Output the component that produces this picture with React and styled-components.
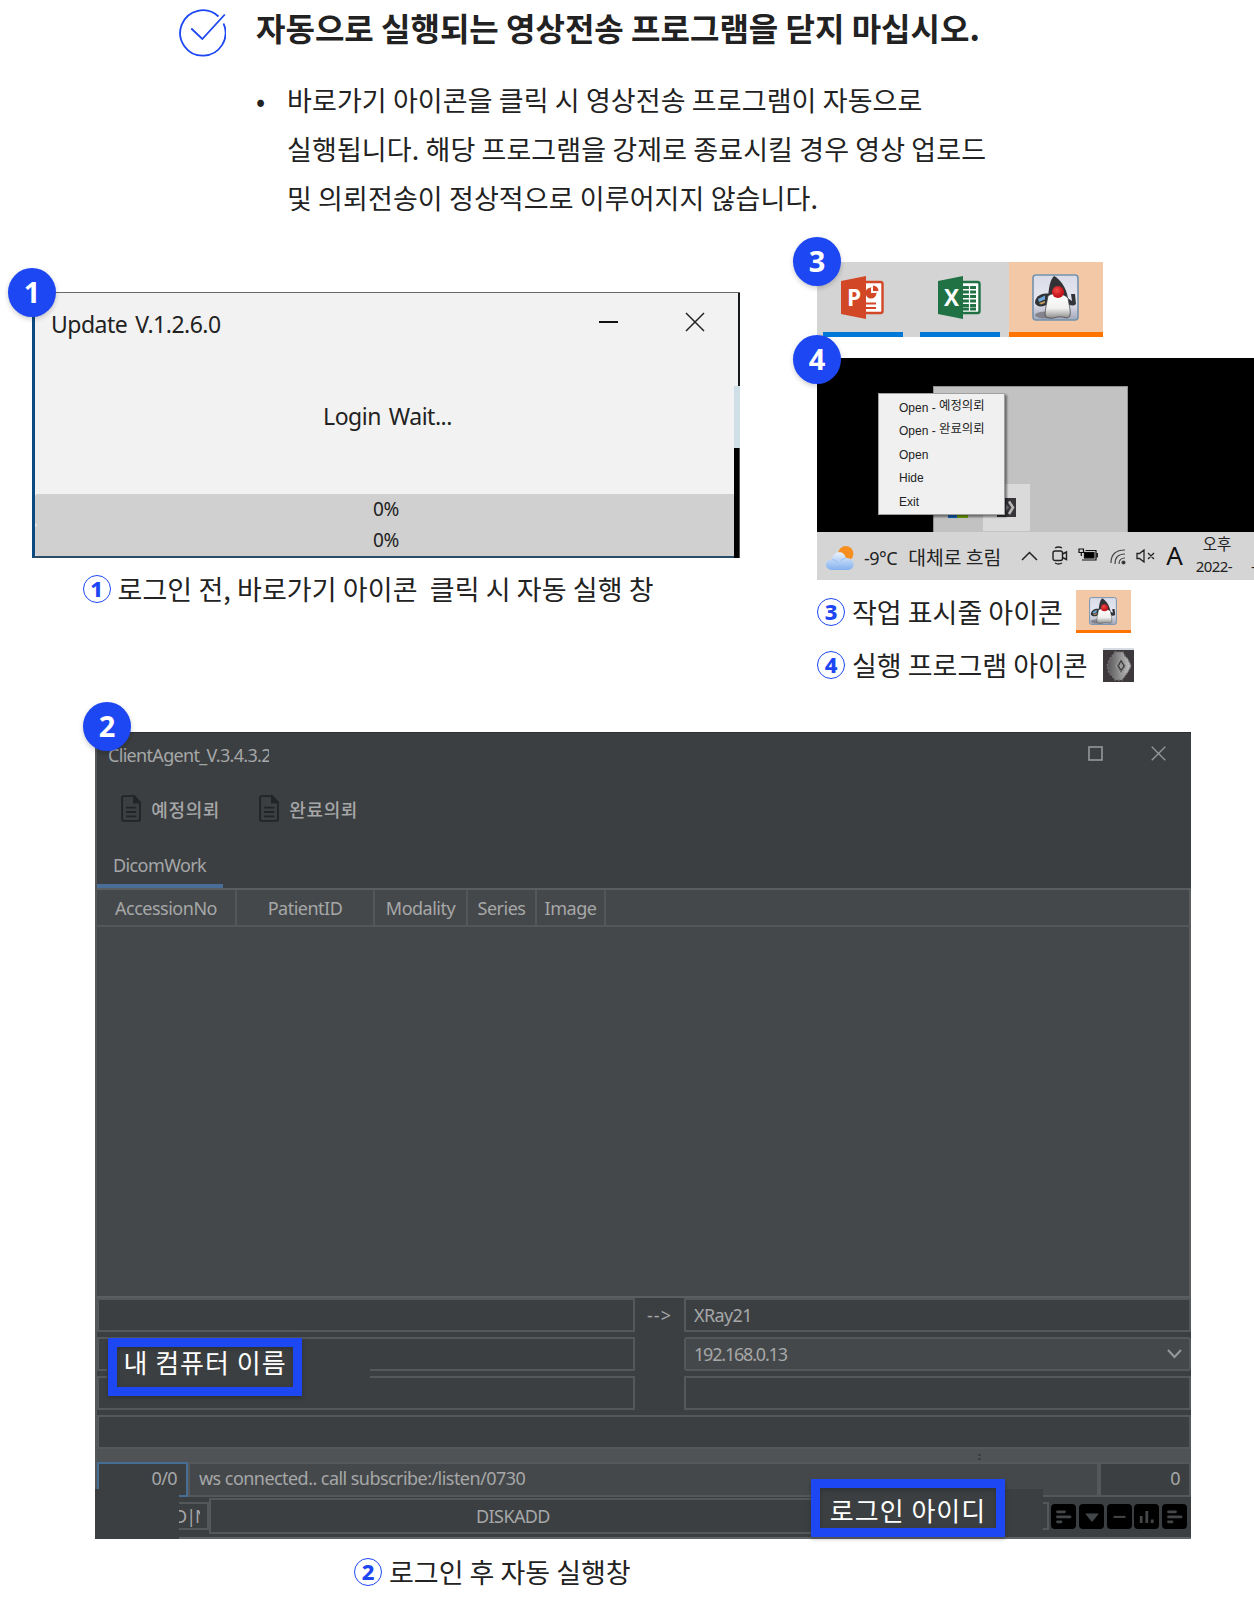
import React from "react";
import styled, { createGlobalStyle } from "styled-components";

const KR = '"Noto Sans CJK KR", sans-serif';
const UI = '"Noto Sans", "Noto Sans CJK KR", sans-serif';
const BLUE = "#1d47f3";
const LINE = "#5b5d5f";

const Global = createGlobalStyle`
  * { box-sizing: border-box; }
  body { margin: 0; background: #fff; font-family: ${KR}; color: #222; overflow: hidden; }
  svg { display: block; }
`;

const Page = styled.main`
  width: 1254px;
  height: 1608px;
  display: flex;
  flex-direction: column;
  overflow: hidden;
`;

const Text = styled.span`
  display: block;
  white-space: pre;
  font-family: ${(p) => p.$font || KR};
  font-size: ${(p) => p.$size}px;
  font-weight: ${(p) => p.$weight || 400};
  line-height: ${(p) => p.$lh || p.$size}px;
  letter-spacing: ${(p) => p.$ls || 0}px;
  word-spacing: ${(p) => p.$ws || 0}px;
  color: ${(p) => p.$color || "inherit"};
`;

const Intro = styled.header`
  display: flex;
  align-items: flex-start;
  gap: 30px;
  height: 262px;
  padding: 7px 0 0 178px;
`;
const IntroBody = styled.div`
  display: flex;
  flex-direction: column;
`;
const Title = styled.h1`
  margin: 0;
  font-size: 32px;
  line-height: 40px;
  font-weight: 700;
  white-space: nowrap;
`;
const Bullet = styled.div`
  display: flex;
  margin-top: 28px;
  font-size: 27px;
  line-height: 49px;
  letter-spacing: 0.1px;
  white-space: pre;
`;
const Dot = styled.span`
  width: 31px;
`;

const Middle = styled.section`
  display: flex;
  height: 470px;
`;
const LeftFigure = styled.div`
  width: 785px;
  padding: 30px 0 0 32px;
`;
const RightFigure = styled.div`
  width: 469px;
  padding-left: 32px;
`;
const Anchor = styled.div`
  position: relative;
`;
const Badge = styled.b`
  position: absolute;
  left: ${(p) => p.$x}px;
  top: ${(p) => p.$y}px;
  width: 48px;
  height: 49px;
  border-radius: 50%;
  background: ${BLUE};
  color: #fff;
  font: 700 29px/47px "Open Sans", sans-serif;
  text-align: center;
  box-shadow: 0 2px 5px rgba(0, 0, 0, 0.2);
  z-index: 3;
`;
const Caption = styled.div`
  display: flex;
  align-items: center;
  height: ${(p) => p.$h || 40}px;
  margin-top: ${(p) => p.$mt || 0}px;
  padding-left: ${(p) => p.$pl || 0}px;
`;
const Ring = styled.b`
  width: 28px;
  height: 28px;
  border: 1px solid ${BLUE};
  border-radius: 50%;
  color: ${BLUE};
  font: 800 22px/25px "Noto Sans", sans-serif;
  text-align: center;
  margin-right: 7px;
`;

const UpdateWindow = styled.div`
  display: grid;
  grid-template-columns: 702px 6px;
  width: 708px;
  height: 266px;
  border-top: 1px solid #6a6a6a;
`;
const UpdatePane = styled.div`
  display: flex;
  flex-direction: column;
  background: #f2f2f2;
  border-left: 3px solid #0b4a80;
  border-bottom: 2px solid #2b4c66;
`;
const UpdateBar = styled.div`
  display: flex;
  height: 60px;
  padding: 0 0 0 16px;
`;
const UpdateButtons = styled.div`
  display: flex;
  align-items: center;
  gap: 67px;
  margin-left: auto;
  padding-right: 29px;
  height: 57px;
`;
const UpdateMessage = styled.div`
  display: flex;
  justify-content: center;
  padding: 47px 0 0 6px;
  height: 141px;
`;
const Progress = styled.div`
  display: flex;
  justify-content: center;
  height: 31px;
  padding-left: 3px;
  background: #d0d0d0;
  border-radius: 3px 0 0 3px;
`;
const Edge = styled.div`
  display: grid;
  grid-template-rows: 93px 62px 1fr;
`;
const EdgeTop = styled.div`
  background: #f2f2f2;
  border-right: 2px solid #161a1d;
`;
const EdgeBlue = styled.div`
  background: #d0dee8;
`;
const EdgeBlack = styled.div`
  background: #000;
  border-right: 1px solid #555;
`;

const Taskbar = styled.div`
  display: flex;
  width: 286px;
  height: 75px;
  background: #d4d4d4;
`;
const Task = styled.div`
  display: flex;
  justify-content: center;
  width: ${(p) => p.$w}px;
  margin-left: ${(p) => p.$ml}px;
  padding-top: ${(p) => p.$pt}px;
  padding-right: 2px;
  background: ${(p) => p.$bg || "transparent"};
  border-bottom: 5px solid ${(p) => p.$line};
`;

const Desktop = styled.div`
  position: relative;
  margin-top: 21px;
  width: 437px;
  height: 222px;
  background: #000;
  display: flex;
  flex-direction: column;
`;
const Backdrop = styled.div`
  height: 174px;
  padding: 28px 0 0 116px;
`;
const TrayPopup = styled.div`
  width: 195px;
  height: 146px;
  background: #c2c2c2;
  border: 1px solid #929292;
  border-bottom: 0;
  display: flex;
  align-items: flex-end;
  padding-left: 14px;
`;
const FlagChip = styled.div`
  width: 20px;
  height: 4px;
  margin-bottom: 14px;
  background: linear-gradient(90deg, #1762b8 45%, #77a80c 45%);
`;
const TrayHighlight = styled.div`
  width: 47px;
  height: 47px;
  margin-left: 15px;
  margin-bottom: 1px;
  background: #dadada;
  padding: 14px 0 0 14px;
`;
const Menu = styled.div`
  position: absolute;
  left: 61px;
  top: 35px;
  width: 127px;
  height: 122px;
  padding: 2px 0 0 20px;
  background: #f0f0f0;
  border: 1px solid #a0a0a0;
  box-shadow: 2px 2px 2px rgba(0, 0, 0, 0.45);
`;
const MenuItem = styled.div`
  display: flex;
  height: 23.4px;
  font: 12px/24px "Liberation Sans", sans-serif;
  color: #222;
  white-space: pre;
`;
const MenuKr = styled.span`
  font: 12.4px/18px ${KR};
`;
const Tray = styled.div`
  display: flex;
  align-items: flex-start;
  height: 48px;
  background: #d5d5d5;
  overflow: hidden;
`;
const TraySlot = styled.div`
  margin-left: ${(p) => p.$ml}px;
  margin-top: ${(p) => p.$mt}px;
  flex: none;
`;
const Clock = styled.div`
  width: 60px;
  margin-left: 13px;
  flex: none;
`;
const ClockRow = styled.div`
  display: flex;
  justify-content: ${(p) => p.$justify};
  padding-left: ${(p) => p.$pl || 0}px;
  height: 22px;
`;
const DukeThumb = styled.div`
  display: flex;
  justify-content: center;
  width: 55px;
  height: 43px;
  margin-left: ${(p) => p.$ml}px;
  padding-top: 7px;
  background: #f3c8a6;
  border-bottom: 3px solid #ff7300;
`;
const GearThumb = styled.div`
  width: 31px;
  height: 34px;
  margin-left: ${(p) => p.$ml}px;
  padding-top: 1px;
  background: #3d383b;
  border-top: 2px solid #d5dde3;
`;

const AgentWrap = styled.section`
  position: relative;
  width: 1096px;
  margin-left: 95px;
`;
const Agent = styled.div`
  height: 807px;
  background: #3c3f41;
  border-left: 2px solid #55585a;
  border-top: 1px solid #2d2f31;
  border-bottom: 2px solid #606264;
  color: #a5a7a8;
  display: flex;
  flex-direction: column;
`;
const AgentTitle = styled.div`
  display: flex;
  justify-content: space-between;
  height: 56px;
  padding: 10px 25px 0 11px;
`;
const TitleClip = styled.div`
  width: 161px;
  height: 26px;
  margin-top: -1px;
  overflow: hidden;
`;
const AgentControls = styled.div`
  display: flex;
  gap: 48px;
  padding-top: 3px;
`;
const Tools = styled.div`
  display: flex;
  height: 56px;
  gap: 39px;
  padding: 5px 0 0 24px;
`;
const Tool = styled.div`
  display: flex;
  align-items: center;
  gap: 10px;
  height: 29px;
  width: 99px;
`;
const TabBar = styled.div`
  display: flex;
  height: 45px;
  border-bottom: 2px solid ${LINE};
`;
const Tab = styled.div`
  width: 126px;
  height: 43px;
  padding: 7px 0 0 16px;
  border-bottom: 4px solid #4a6d98;
`;
const HeaderRow = styled.div`
  display: grid;
  grid-template-columns: 140px 138px 93px 69px 69px 1fr;
  height: 37px;
  background: #45484a;
  border-bottom: 2px solid #54575a;
  border-right: 2px solid ${LINE};
`;
const HeaderCell = styled.div`
  display: flex;
  justify-content: center;
  padding-top: 5px;
  border-right: ${(p) => (p.$last ? 0 : 2)}px solid #54575a;
`;
const TableBody = styled.div`
  height: 371px;
  background: #45484a;
  border-right: 2px solid ${LINE};
  border-bottom: 2px solid ${LINE};
`;
const Form = styled.div`
  display: grid;
  grid-template-columns: 538px 49px 1fr;
  grid-auto-rows: 34px;
  row-gap: 5px;
  height: 117px;
`;
const Field = styled.div`
  display: flex;
  justify-content: space-between;
  align-items: center;
  padding: 0 7px 1px 8px;
  background: ${(p) => (p.$raised ? "#45484a" : "#3c3f41")};
  border: 2px solid #55585a;
  border-radius: ${(p) => (p.$raised ? 3 : 0)}px;
`;
const Arrow = styled.div`
  display: flex;
  align-items: center;
  justify-content: center;
`;
const WideField = styled.div`
  height: 34px;
  border: 2px solid #55585a;
`;
const Splitter = styled.div`
  height: 13px;
  background: #505355;
  display: flex;
  justify-content: flex-end;
  padding: 5px 210px 0 0;
`;
const Grip = styled.i`
  width: 3px;
  height: 6px;
  border-top: 2px solid #3c3f41;
  border-bottom: 2px solid #3c3f41;
`;
const Status = styled.div`
  display: grid;
  grid-template-columns: 91px 911px 1fr;
  height: 35px;
`;
const StatusCell = styled.div`
  display: flex;
  align-items: center;
  justify-content: ${(p) => p.$justify || "flex-start"};
  padding: 0 9px 3px;
  background: ${(p) => p.$bg || "#3c3f41"};
  border: 2px solid ${(p) => p.$line || "#55585a"};
`;
const Footer = styled.div`
  display: flex;
  align-items: center;
  height: 40px;
  padding-bottom: 2px;
`;
const FooterBox = styled.div`
  display: flex;
  align-items: center;
  justify-content: ${(p) => p.$justify || "center"};
  width: ${(p) => p.$w}px;
  height: ${(p) => p.$h}px;
  border: 2px solid #55585a;
  padding-right: ${(p) => p.$pr || 0}px;
`;
const FooterClip = styled.div`
  width: 26px;
  overflow: hidden;
`;
const FooterIcons = styled.div`
  display: flex;
  gap: 2.8px;
  padding-left: 2px;
`;
const Mask = styled.div`
  position: absolute;
  left: ${(p) => p.$x}px;
  top: ${(p) => p.$y}px;
  width: ${(p) => p.$w}px;
  height: ${(p) => p.$h}px;
  background: #3c3f41;
`;
const Callout = styled.div`
  position: absolute;
  left: ${(p) => p.$x}px;
  top: ${(p) => p.$y}px;
  width: ${(p) => p.$w}px;
  height: 58px;
  display: flex;
  justify-content: center;
  padding-top: ${(p) => p.$pt}px;
  border: 9px solid ${BLUE};
  background: #3c3f41;
  color: #fff;
  box-shadow: 0 2px 4px rgba(0, 0, 0, 0.25), inset 0 2px 4px rgba(0, 0, 0, 0.25);
`;
const CalloutText = styled(Text)`
  margin-top: ${(p) => p.$shift || 0}px;
`;

const CheckMark = () => (
  <svg width="48" height="50" viewBox="0 0 48 50" fill="none" stroke={BLUE} strokeWidth="1.8">
    <path d="M40.5 9.5A22.7 22.7 0 1 0 45.5 16.5" />
    <path d="M13.3 21.5L24.3 32L46.8 7.5" />
  </svg>
);

const Office = ({ color, letter, children }) => (
  <svg width="43" height="43" viewBox="0 0 43 43">
    <rect x="22" y="6" width="19.5" height="31" rx="2" fill="#fff" stroke={color} strokeWidth="2.4" />
    {children}
    <path d="M0 5L25 0V43L0 38Z" fill={color} />
    <text x="6" y="29.5" fontFamily="Open Sans, sans-serif" fontWeight="700" fontSize="22.5" fill="#fff">{letter}</text>
  </svg>
);

const Duke = ({ size }) => (
  <svg width={size} height={size} viewBox="0 0 47 47">
    <defs>
      <linearGradient id="dukeSky" x1="0" y1="0" x2="0" y2="1">
        <stop offset="0" stopColor="#d9dce8" />
        <stop offset="0.6" stopColor="#e6e7f0" />
        <stop offset="1" stopColor="#a2a6ba" />
      </linearGradient>
      <linearGradient id="dukeBelly" x1="0" y1="0" x2="0" y2="1">
        <stop offset="0" stopColor="#fff" />
        <stop offset="0.6" stopColor="#f0f0ee" />
        <stop offset="1" stopColor="#8c8c8a" />
      </linearGradient>
      <radialGradient id="dukeNose" cx="0.4" cy="0.35">
        <stop offset="0" stopColor="#f54a48" />
        <stop offset="1" stopColor="#c4161c" />
      </radialGradient>
    </defs>
    <rect x="1" y="1" width="45" height="45" rx="3" fill="url(#dukeSky)" stroke="#7392ad" strokeWidth="1.6" />
    <ellipse cx="14" cy="41" rx="11" ry="3.5" fill="#6d6d74" opacity="0.7" />
    <path d="M3 29C3 23 9 18 18 20L18 29C12 33 5 34 3 29Z" fill="#2f3236" />
    <path d="M6 25L13 21.5V25.5L7 28Z" fill="#6da6d6" />
    <path d="M7 29L13 27V29L9 30.5Z" fill="#c09a5c" />
    <path d="M34 23L40 27L39 20L43 20L44 30C41 33 37 31 34 29Z" fill="#333438" />
    <path d="M22 2C28 5 34 13 36 24L16 23C17 13 18 6 22 2Z" fill="#333337" />
    <path d="M16 22C21 18 31 19 36 24C37 31 39 37 38 42C35 46 31 42 28 43C24 42 20 47 13 42C13 35 15 28 16 22Z" fill="url(#dukeBelly)" stroke="#3c3c40" strokeWidth="0.7" />
    <circle cx="26" cy="18" r="6" fill="url(#dukeNose)" />
  </svg>
);

const Gear = () => (
  <svg width="31" height="30" viewBox="0 0 31 30">
    <defs>
      <linearGradient id="gearMetal" x1="0" x2="1">
        <stop offset="0" stopColor="#565456" />
        <stop offset="0.5" stopColor="#8d8c8d" />
        <stop offset="1" stopColor="#c4c4c4" />
      </linearGradient>
    </defs>
    <path d="M12 1H20L22 5L25 8L28 15L25 21L22 25L19 29H12L9 25L6 22L4 15L6 9L9 5Z" fill="url(#gearMetal)" stroke="#717071" strokeWidth="1.4" strokeDasharray="2 1.6" />
    <path d="M18 7L23 15L18 23L13 15Z" fill="#6a686a" stroke="#a2a2a2" />
    <path d="M18 10L21 15L18 19L15.5 15Z" fill="#9b9b9b" stroke="#333" />
  </svg>
);

const DocIcon = () => (
  <svg width="22" height="29" viewBox="0 0 22 29" fill="none" stroke="#222426" strokeWidth="2">
    <path d="M3 1.2H14.5L20.5 8V26Q20.5 27.8 18.5 27.8H3Q1.2 27.8 1.2 26V3Q1.2 1.2 3 1.2Z" />
    <path d="M14 1.5V8H20.5Z" fill="#222426" />
    <path d="M5.5 13.5H16.5M5.5 18.3H16.5M5.5 23H16.5" />
  </svg>
);

const Cross = ({ size, color, width }) => (
  <svg width={size} height={size} viewBox="0 0 20 20" fill="none" stroke={color} strokeWidth={width}>
    <path d="M1 1L19 19M19 1L1 19" />
  </svg>
);

const Weather = () => (
  <svg width="30" height="26" viewBox="0 0 31 26">
    <defs>
      <linearGradient id="cloudFill" x1="0" y1="0" x2="0" y2="1">
        <stop offset="0" stopColor="#e9f2fd" />
        <stop offset="1" stopColor="#84b1ee" />
      </linearGradient>
    </defs>
    <circle cx="21.5" cy="8.5" r="7.8" fill="#f78f20" />
    <path d="M7 25.3C-1.5 24.5-0.8 15 7 14.5C9 5 20 5 21.5 13C31.5 12 32 25 24 25.3Z" fill="url(#cloudFill)" />
    <path d="M7 14.8C12 14.5 13 18 13 18M21 13.5C17.5 13.5 16 16 16 16" stroke="#8ab4ea" strokeWidth="0.8" fill="none" />
  </svg>
);

const footerShapes = [
  <path key="a" d="M6.5 7.8H13.5M6.5 12.9H19M6.5 17.8H10" strokeLinecap="round" strokeWidth="2.8" />,
  <path key="b" d="M6 9.5H20L13 18Z" fill="#44474a" stroke="none" />,
  <path key="c" d="M6.5 12.9H18.5" />,
  <path key="d" d="M7.2 12V19M12.8 7V19M18.2 15.5V19" strokeWidth="2.8" />,
  <path key="e" d="M6.5 7.8H13.5M6.5 12.9H19M6.5 17.8H10" strokeLinecap="round" strokeWidth="2.8" />,
];

const FooterIcon = ({ children }) => (
  <svg width="25" height="25" viewBox="0 0 25 25" fill="none" stroke="#44474a" strokeWidth="2">
    <rect width="25" height="25" rx="4" fill="#000" stroke="none" />
    {children}
  </svg>
);

const columns = ["AccessionNo", "PatientID", "Modality", "Series", "Image"];
const menuItems = [
  ["Open - ", "예정의뢰"],
  ["Open - ", "완료의뢰"],
  ["Open", ""],
  ["Hide", ""],
  ["Exit", ""],
];

const Label = ({ children, ls = -0.6, size = 18 }) => (
  <Text $font={UI} $size={size} $lh={26} $ls={ls}>{children}</Text>
);

export default function App() {
  return (
    <Page>
      <Global />
      <Intro>
        <CheckMark />
        <IntroBody>
          <Title>자동으로 실행되는 영상전송 프로그램을 닫지 마십시오.</Title>
          <Bullet>
            <Dot>•</Dot>
            <span>{"바로가기 아이콘을 클릭 시 영상전송 프로그램이 자동으로\n실행됩니다. 해당 프로그램을 강제로 종료시킬 경우 영상 업로드\n및 의뢰전송이 정상적으로 이루어지지 않습니다."}</span>
          </Bullet>
        </IntroBody>
      </Intro>

      <Middle>
        <LeftFigure>
          <Anchor>
            <Badge $x={-24} $y={-24}>1</Badge>
            <UpdateWindow>
              <UpdatePane>
                <UpdateBar>
                  <Text $font={UI} $size={23} $lh={62} $ls={-0.5} $ws={2.5} $color="#222">Update V.1.2.6.0</Text>
                  <UpdateButtons>
                    <svg width="19" height="2"><rect width="19" height="2" fill="#111" /></svg>
                    <Cross size={20} color="#222" width={1.5} />
                  </UpdateButtons>
                </UpdateBar>
                <UpdateMessage>
                  <Text $font={UI} $size={23} $lh={32} $ls={-0.5} $ws={2.5} $color="#222">Login Wait...</Text>
                </UpdateMessage>
                <Progress><Text $font={UI} $size={19} $lh={30} $ls={-0.3} $color="#222">0%</Text></Progress>
                <Progress><Text $font={UI} $size={19} $lh={30} $ls={-0.3} $color="#222">0%</Text></Progress>
              </UpdatePane>
              <Edge><EdgeTop /><EdgeBlue /><EdgeBlack /></Edge>
            </UpdateWindow>
          </Anchor>
          <Caption $pl={50.5} $mt={11}>
            <Ring>1</Ring>
            <Text $size={27} $lh={40} $ls={0.08}>{"로그인 전, 바로가기 아이콘  클릭 시 자동 실행 창"}</Text>
          </Caption>
        </LeftFigure>

        <RightFigure>
          <Anchor>
            <Badge $x={-24} $y={-25}>3</Badge>
            <Taskbar>
              <Task $w={80} $ml={6} $pt={14} $line="#0078d7">
                <Office color="#d24726" letter="P">
                  <circle cx="30" cy="17" r="5.5" fill="#d24726" />
                  <path d="M30 17V11.5A5.5 5.5 0 0 1 35.5 17Z" fill="#fff" />
                  <path d="M32 15V9.5A5.5 5.5 0 0 1 37.5 15Z" fill="#d24726" />
                  <path d="M24 27.5H35M24 32H35" stroke="#d24726" strokeWidth="2" />
                </Office>
              </Task>
              <Task $w={80} $ml={17} $pt={14} $line="#0078d7">
                <Office color="#207245" letter="X">
                  <path d="M25 11.5H38M25 16H38M25 20.5H38M25 25H38M25 29.5H38M25 33H38" stroke="#207245" strokeWidth="2.8" />
                  <path d="M31.5 8V35" stroke="#fff" strokeWidth="1.2" />
                </Office>
              </Task>
              <Task $w={94} $ml={9} $pt={12} $bg="#f3c8a6" $line="#ff7300"><Duke size={47} /></Task>
            </Taskbar>
          </Anchor>

          <Desktop>
            <Badge $x={-24} $y={-23}>4</Badge>
            <Backdrop>
              <TrayPopup>
                <FlagChip />
                <TrayHighlight>
                  <svg width="19" height="19" viewBox="0 0 19 19">
                    <rect width="19" height="19" fill="#37343a" />
                    <path d="M12 3.5L16 9.5L12 16" stroke="#b8b8b8" strokeWidth="2.6" fill="none" />
                    <path d="M9 6L12 9.5L9 13" fill="#77757a" />
                  </svg>
                </TrayHighlight>
              </TrayPopup>
            </Backdrop>
            <Menu>
              {menuItems.map(([en, kr]) => (
                <MenuItem key={en + kr}>{en}<MenuKr>{kr}</MenuKr></MenuItem>
              ))}
            </Menu>
            <Tray>
              <TraySlot $ml={8} $mt={13}><Weather /></TraySlot>
              <TraySlot $ml={9} $mt={13}><Text $font={UI} $size={18} $lh={26} $ls={-0.5}>-9°C</Text></TraySlot>
              <TraySlot $ml={11} $mt={12}><Text $size={19.3} $lh={26}>대체로 흐림</Text></TraySlot>
              <TraySlot $ml={20} $mt={19}>
                <svg width="17" height="10" fill="none" stroke="#222" strokeWidth="1.5"><path d="M1 9L8.5 1.5L16 9" /></svg>
              </TraySlot>
              <TraySlot $ml={14} $mt={14}>
                <svg width="16" height="19" fill="none" stroke="#222" strokeWidth="1.4">
                  <rect x="1" y="5" width="9.5" height="9.5" rx="2" /><path d="M10.5 8L14.5 6V13.5L10.5 11.5M3 2Q6.5 0 10 2M3 17Q6.5 19 10 17" />
                </svg>
              </TraySlot>
              <TraySlot $ml={10} $mt={15}>
                <svg width="20" height="15" fill="none" stroke="#111" strokeWidth="1.2">
                  <rect x="6.5" y="5.5" width="9.5" height="5.5" fill="#000" /><path d="M4 13H18V3.5H7.5M19.3 6V10.5M1 2V5.5H5.5V2ZM3.3 6V9" />
                </svg>
              </TraySlot>
              <TraySlot $ml={12} $mt={17}>
                <svg width="17" height="16" fill="none" stroke="#444" strokeWidth="1.2">
                  <path d="M1 14Q1 1 15 1M5 15Q5 5 15 5M9 15Q9 9 15 9" /><circle cx="13.5" cy="13.5" r="1.5" fill="#222" />
                </svg>
              </TraySlot>
              <TraySlot $ml={9} $mt={17}>
                <svg width="19" height="14" fill="none" stroke="#222" strokeWidth="1.3">
                  <path d="M1 4.5H3.5L8 1V13L3.5 9.5H1ZM12 4L18 10M18 4L12 10" />
                </svg>
              </TraySlot>
              <TraySlot $ml={11} $mt={10}><Text $font={UI} $size={26} $lh={27} $color="#111">A</Text></TraySlot>
              <Clock>
                <ClockRow $pl={7} $justify="flex-start"><Text $size={15.5} $lh={23}>오후</Text></ClockRow>
                <ClockRow $justify="space-between"><Text $font={UI} $size={15} $lh={25} $ls={-0.6}>2022-</Text><Text $font={UI} $size={15} $lh={25}>-</Text></ClockRow>
              </Clock>
            </Tray>
          </Desktop>

          <Caption $h={43} $mt={10}>
            <Ring>3</Ring>
            <Text $size={27} $lh={40}>작업 표시줄 아이콘</Text>
            <DukeThumb $ml={13}><Duke size={28} /></DukeThumb>
          </Caption>
          <Caption $h={40} $mt={12}>
            <Ring>4</Ring>
            <Text $size={27} $lh={40}>실행 프로그램 아이콘</Text>
            <GearThumb $ml={15}><Gear /></GearThumb>
          </Caption>
        </RightFigure>
      </Middle>

      <AgentWrap>
        <Badge $x={-12} $y={-30}>2</Badge>
        <Agent>
          <AgentTitle>
            <TitleClip><Label ls={-0.68}>ClientAgent_V.3.4.3.2</Label></TitleClip>
            <AgentControls>
              <svg width="15" height="15" fill="none" stroke="#96989a" strokeWidth="1.6"><rect x="1" y="1" width="13" height="13" /></svg>
              <Cross size={15} color="#96989a" width={1.8} />
            </AgentControls>
          </AgentTitle>
          <Tools>
            <Tool><DocIcon /><Text $size={18} $lh={26} $weight={500} $ls={0.6}>예정의뢰</Text></Tool>
            <Tool><DocIcon /><Text $size={18} $lh={26} $weight={500} $ls={0.6}>완료의뢰</Text></Tool>
          </Tools>
          <TabBar><Tab><Label>DicomWork</Label></Tab></TabBar>
          <HeaderRow>
            {columns.map((c) => <HeaderCell key={c}><Label ls={-0.5}>{c}</Label></HeaderCell>)}
            <HeaderCell $last />
          </HeaderRow>
          <TableBody />
          <Form>
            <Field /><Arrow><Label ls={1}>{"-->"}</Label></Arrow><Field><Label>XRay21</Label></Field>
            <Field /><span />
            <Field $raised>
              <Label ls={-1.2}>192.168.0.13</Label>
              <svg width="15" height="10" fill="none" stroke="#96989a" strokeWidth="2"><path d="M1 1L7.5 8L14 1" /></svg>
            </Field>
            <Field /><span /><Field />
          </Form>
          <WideField />
          <Splitter><Grip /></Splitter>
          <Status>
            <StatusCell $justify="flex-end" $line="#466d94"><Label>0/0</Label></StatusCell>
            <StatusCell $bg="#45484a"><Label ls={-0.55}>ws connected.. call subscribe:/listen/0730</Label></StatusCell>
            <StatusCell $justify="flex-end"><Label>0</Label></StatusCell>
          </Status>
          <Footer>
            <FooterBox $w={112} $h={28} $justify="flex-end" $pr={7}><FooterClip><Label ls={-1}>D|N</Label></FooterClip></FooterBox>
            <FooterBox $w={608} $h={36}><Label>DISKADD</Label></FooterBox>
            <FooterBox $w={232} $h={28} />
            <FooterIcons>
              {footerShapes.map((s, i) => <FooterIcon key={i}>{s}</FooterIcon>)}
            </FooterIcons>
          </Footer>
        </Agent>
        <Mask $x={12} $y={613} $w={263} $h={49} />
        <Mask $x={0} $y={757} $w={84} $h={50} />
        <Mask $x={905} $y={757} $w={43} $h={45} />
        <Callout $x={13} $y={606} $w={194} $pt={0}><CalloutText $size={26} $lh={33} $ls={1} $shift={-2}>내 컴퓨터 이름</CalloutText></Callout>
        <Callout $x={716} $y={747} $w={194} $pt={5}><CalloutText $size={26} $lh={33} $ls={1}>로그인 아이디</CalloutText></Callout>
      </AgentWrap>

      <Caption $pl={354} $mt={13}>
        <Ring>2</Ring>
        <Text $size={27} $lh={40}>로그인 후 자동 실행창</Text>
      </Caption>
    </Page>
  );
}
